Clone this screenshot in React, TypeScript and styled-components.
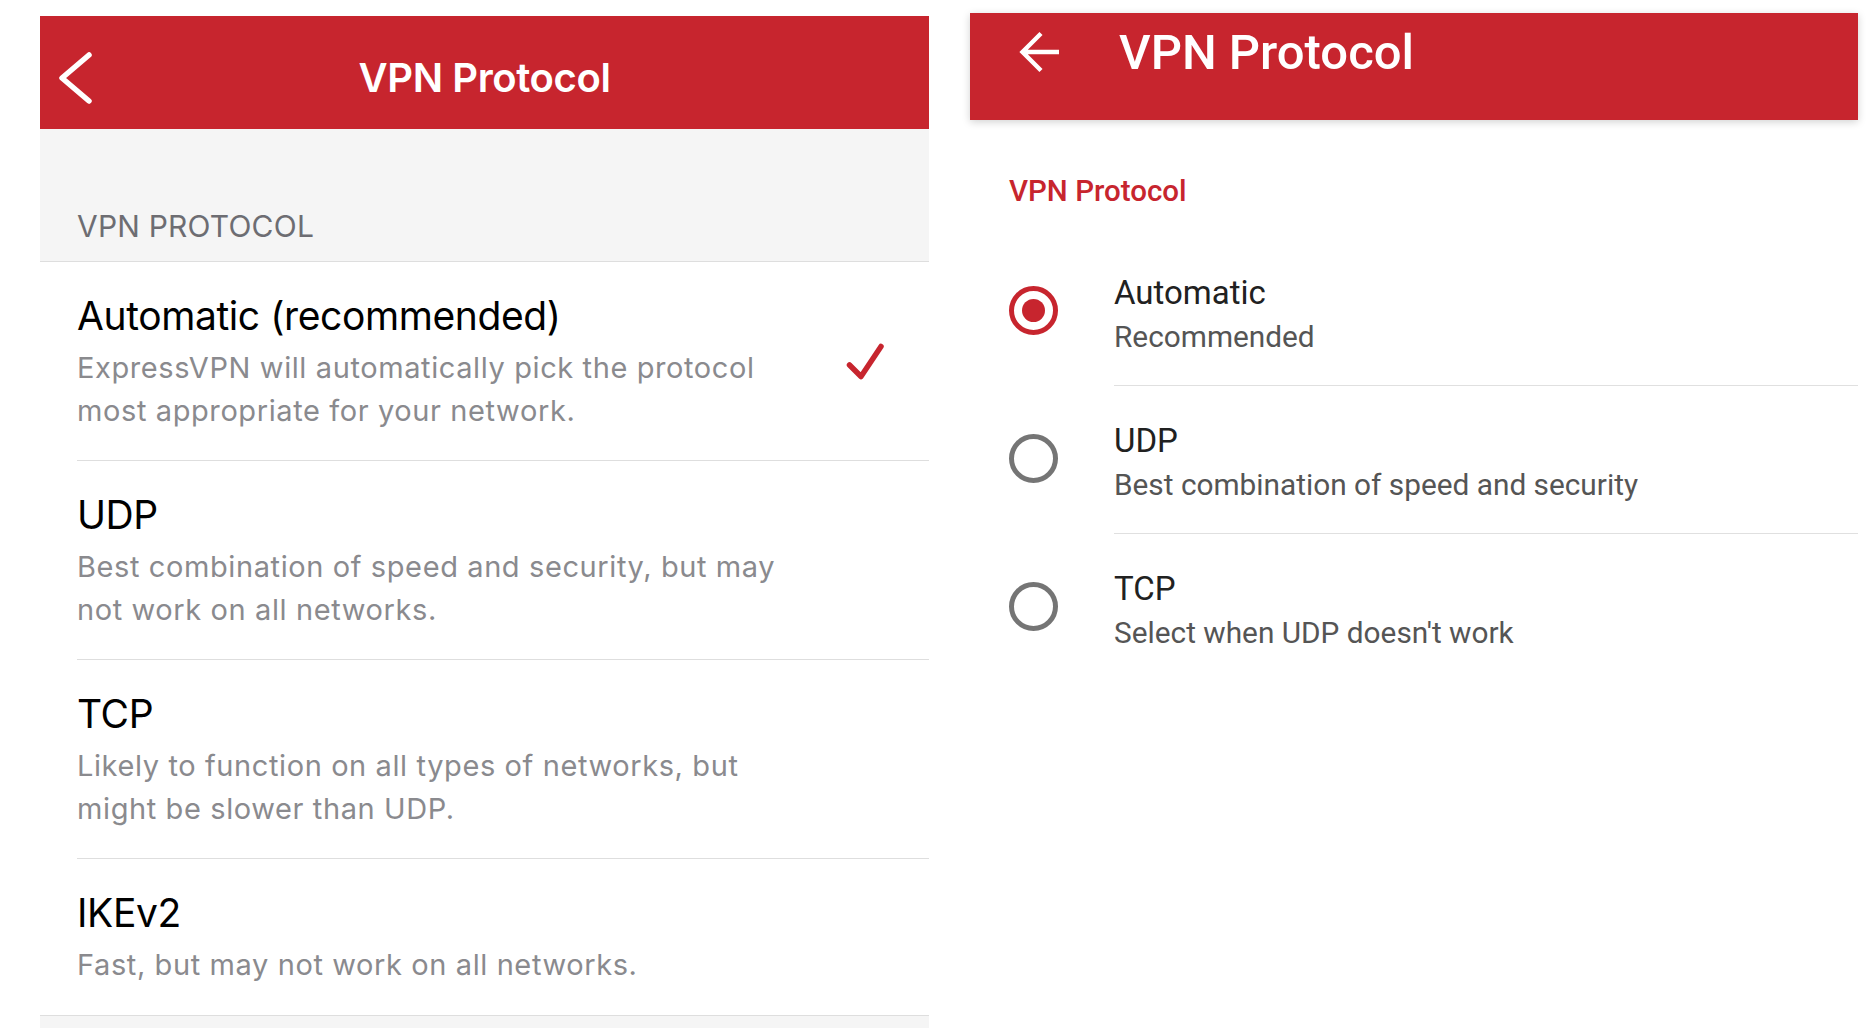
import React from 'react';
import styled, { createGlobalStyle } from 'styled-components';

const RED = '#C7252E';

const GlobalStyle = createGlobalStyle`
  html, body {
    margin: 0;
    padding: 0;
    background: #ffffff;
    overflow: hidden;
  }
  * { box-sizing: border-box; }
`;

const Page = styled.div`
  display: flex;
  align-items: stretch;
  gap: 41px;
  padding-left: 40px;
  height: 1028px;
  overflow: hidden;
`;

const Panel = styled.section<{ $top: number; $width: number; $bg: string; $font: string }>`
  width: ${(p) => p.$width}px;
  margin-top: ${(p) => p.$top}px;
  background: ${(p) => p.$bg};
  display: flex;
  flex-direction: column;
  font-family: ${(p) => p.$font};
`;

/* ---------- iOS side ---------- */

const IosHeader = styled.header`
  height: 113px;
  padding-top: 11px;
  background: ${RED};
  display: grid;
  grid-template-columns: 1fr auto 1fr;
  align-items: center;
`;

const BackChevron = styled.svg`
  margin-left: 18px;
  display: block;
`;

const IosTitle = styled.h1`
  margin: 0;
  color: #ffffff;
  font-size: 40px;
  line-height: 50px;
  font-weight: 600;
  letter-spacing: -0.4px;
`;

const SectionHeader = styled.div`
  height: 132px;
  display: flex;
  align-items: flex-end;
  padding: 0 0 17px 37px;
  color: #6d6d72;
  font-size: 30px;
  line-height: 36px;
  letter-spacing: 0.2px;
`;

const IosList = styled.div`
  background: #ffffff;
  border-top: 1px solid #dedede;
  border-bottom: 1px solid #dedede;
`;

const IosRow = styled.div`
  margin-left: 37px;
  display: flex;
  align-items: center;
  justify-content: space-between;
  padding: 30px 43px 28px 0;
  border-bottom: 1px solid #dedede;
  &:last-child {
    border-bottom: none;
    padding-bottom: 29px;
  }
`;

const IosText = styled.div`
  width: 725px;
`;

const IosItemTitle = styled.div`
  color: #000000;
  font-size: 39px;
  line-height: 48px;
  letter-spacing: -0.4px;
`;

const IosItemDesc = styled.div`
  margin-top: 6px;
  color: #8a8a8e;
  font-size: 29px;
  line-height: 43px;
  letter-spacing: 0.6px;
`;

/* ---------- Android side ---------- */

const AppBar = styled.header`
  position: relative;
  z-index: 1;
  height: 107px;
  padding: 10px 0 0 46px;
  background: ${RED};
  box-shadow: 0 2px 8px rgba(0, 0, 0, 0.18);
`;

const AppBarRow = styled.div`
  height: 60px;
  display: flex;
  align-items: center;
  gap: 55px;
`;

const ArrowIcon = styled.svg`
  display: block;
  margin-top: -3px;
`;

const AppBarTitle = styled.h1`
  margin: 0;
  color: #ffffff;
  font-size: 49px;
  line-height: 60px;
  font-weight: 500;
`;

const Subheading = styled.div`
  padding: 51px 0 0 39px;
  color: ${RED};
  font-size: 29.5px;
  line-height: 40px;
  font-weight: 500;
`;

const RadioList = styled.div`
  margin-top: 27px;
`;

const RadioRow = styled.div`
  display: flex;
  align-items: flex-start;
  &:last-child > div:last-child {
    border-bottom: none;
  }
`;

const RadioCol = styled.div`
  width: 144px;
  padding: 48px 0 0 39px;
`;

const Radio = styled.div<{ $checked: boolean }>`
  width: 49px;
  height: 49px;
  border-radius: 50%;
  border: 5.5px solid ${(p) => (p.$checked ? RED : '#757575')};
  display: grid;
  place-items: center;
  &::after {
    content: '';
    width: 23px;
    height: 23px;
    border-radius: 50%;
    background: ${(p) => (p.$checked ? RED : 'transparent')};
  }
`;

const RadioText = styled.div`
  flex: 1;
  height: 148px;
  padding-top: 35px;
  border-bottom: 1px solid #e0e0e0;
`;

const RadioTitle = styled.div`
  color: #212121;
  font-size: 33px;
  line-height: 40px;
`;

const RadioSub = styled.div`
  margin-top: 4px;
  color: #555555;
  font-size: 29.8px;
  line-height: 40px;
`;

const iosItems = [
  {
    title: 'Automatic (recommended)',
    desc: 'ExpressVPN will automatically pick the protocol most appropriate for your network.',
    checked: true,
  },
  {
    title: 'UDP',
    desc: 'Best combination of speed and security, but may not work on all networks.',
    checked: false,
  },
  {
    title: 'TCP',
    desc: 'Likely to function on all types of networks, but might be slower than UDP.',
    checked: false,
  },
  {
    title: 'IKEv2',
    desc: 'Fast, but may not work on all networks.',
    checked: false,
  },
];

const androidItems = [
  { title: 'Automatic', sub: 'Recommended', checked: true },
  { title: 'UDP', sub: 'Best combination of speed and security', checked: false },
  { title: 'TCP', sub: "Select when UDP doesn't work", checked: false },
];

export default function App() {
  return (
    <>
      <GlobalStyle />
      <Page>
        <Panel $top={16} $width={889} $bg="#f5f5f5" $font={'Inter, "Liberation Sans", sans-serif'}>
          <IosHeader>
            <BackChevron width="36" height="56" viewBox="0 0 36 56">
              <path
                d="M31 5 L4 28 L31 51"
                fill="none"
                stroke="#ffffff"
                strokeWidth="5.5"
                strokeLinecap="round"
                strokeLinejoin="round"
              />
            </BackChevron>
            <IosTitle>VPN Protocol</IosTitle>
            <span />
          </IosHeader>
          <SectionHeader>VPN PROTOCOL</SectionHeader>
          <IosList>
            {iosItems.map((item) => (
              <IosRow key={item.title}>
                <IosText>
                  <IosItemTitle>{item.title}</IosItemTitle>
                  <IosItemDesc>{item.desc}</IosItemDesc>
                </IosText>
                {item.checked && (
                  <svg width="42" height="42" viewBox="0 0 42 42">
                    <path
                      d="M5.5 24 L17 35.5 L37 5.5"
                      fill="none"
                      stroke={RED}
                      strokeWidth="5.5"
                      strokeLinecap="round"
                      strokeLinejoin="round"
                    />
                  </svg>
                )}
              </IosRow>
            ))}
          </IosList>
        </Panel>

        <Panel $top={13} $width={888} $bg="#ffffff" $font={'Roboto, "Noto Sans", sans-serif'}>
          <AppBar>
            <AppBarRow>
              <ArrowIcon width="48" height="48" viewBox="0 0 48 48">
                <path
                  d="M43 24 H7 M25 5.5 L6.5 24 L25 42.5"
                  fill="none"
                  stroke="#ffffff"
                  strokeWidth="4.4"
                  strokeLinecap="butt"
                  strokeLinejoin="miter"
                />
              </ArrowIcon>
              <AppBarTitle>VPN Protocol</AppBarTitle>
            </AppBarRow>
          </AppBar>
          <Subheading>VPN Protocol</Subheading>
          <RadioList>
            {androidItems.map((item) => (
              <RadioRow key={item.title}>
                <RadioCol>
                  <Radio $checked={item.checked} />
                </RadioCol>
                <RadioText>
                  <RadioTitle>{item.title}</RadioTitle>
                  <RadioSub>{item.sub}</RadioSub>
                </RadioText>
              </RadioRow>
            ))}
          </RadioList>
        </Panel>
      </Page>
    </>
  );
}
